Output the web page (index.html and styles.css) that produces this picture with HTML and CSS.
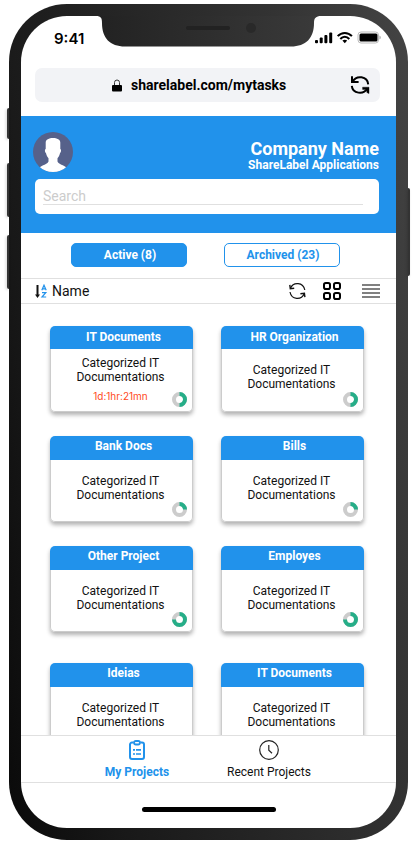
FILE: index.html
```html
<!DOCTYPE html>
<html lang="en">
<head>
<meta charset="utf-8">
<meta name="viewport" content="width=device-width, initial-scale=1">
<title>ShareLabel – My Tasks</title>
<link rel="stylesheet" href="styles.css">
</head>
<body>
<div class="phone">
  <span class="key key-mute"></span>
  <span class="key key-up"></span>
  <span class="key key-down"></span>
  <span class="key key-power"></span>
  <svg class="notch" viewBox="0 0 226 31" width="226" height="31" aria-hidden="true">
    <defs><linearGradient id="notch-fill"><stop offset="0" stop-color="#222"/><stop offset="1" stop-color="#3a3a3a"/></linearGradient></defs>
    <path d="M0 0C5 0 6 2 6 7C6 22 14 30.500 29 30.500H195C210 30.500 218 22 218 7C218 2 220 0 225 0Z" fill="url(#notch-fill)"/>
    <rect x="90" y="10" width="44" height="4" rx="2" fill="#222"/>
    <circle cx="155" cy="12" r="5" fill="#292929"/>
  </svg>
  <div class="screen">
    <div class="status">
      <span class="time">9:41</span>
      <svg width="66" height="14" viewBox="0 0 66 14" aria-hidden="true">
        <rect x="0" y="9" width="3" height="3.200" rx="1"/>
        <rect x="4.700" y="6.500" width="3" height="5.700" rx="1"/>
        <rect x="9.400" y="4" width="3" height="8.200" rx="1"/>
        <rect x="14.200" y="1.500" width="3" height="10.700" rx="1"/>
        <g fill="none" stroke="#000" stroke-width="2"><path d="M22.700 5.200C26.700 .8 32.900 .8 36.900 5.200"/><path d="M25.300 8C28 5 31.600 5 34.300 8"/></g>
        <path d="M27.400 9.600Q29.800 7.800 32.200 9.600L29.800 12.200Z"/>
        <rect x="43" y="1" width="20.500" height="11" rx="3" fill="#fff" stroke="#bbb"/>
        <rect x="44.500" y="2.500" width="18" height="8" rx="1.500"/>
        <path d="M64.300 4.500Q66 5 66 6.500T64.300 8.500Z" fill="#bbb"/>
      </svg>
    </div>
    <div class="address">
      <svg width="10" height="13" viewBox="0 0 10 13" aria-hidden="true"><path d="M2.500 6V3.500A2.500 2.500 0 0 1 7.500 3.500V6" fill="none" stroke="#333"/><rect y="6" width="10" height="6.500" rx="1"/></svg>
      <span class="url">sharelabel.com/mytasks</span>
      <button class="icon-button reload" type="button" aria-label="Reload page">
        <svg width="20" height="20" viewBox="0 0 20 20"><g fill="none" stroke="#000" stroke-width="2"><path d="M2 1.200V7H8.600"/><path d="M2.600 6.800C6.500 -.3 17.400 1.200 18.200 9.300"/><path d="M1.800 10.800C2.600 18.800 13.500 20.200 17.500 13.200"/></g><path d="M12.600 12.200H19V18.600L16.800 17.400V14.400H12.600Z" stroke="#000" stroke-width=".4"/></svg>
      </button>
    </div>
    <header class="header">
      <div class="identity">
        <svg width="40" height="40" viewBox="0 0 40 40" role="img" aria-label="Profile photo">
          <defs><clipPath id="avatar"><circle cx="20" cy="20" r="20"/></clipPath></defs>
          <circle cx="20" cy="20" r="20" fill="#56618a"/>
          <path clip-path="url(#avatar)" fill="#fff" d="M12.700 10.500C12.700 7.500 16 6 20 6C24 6 27.300 7.500 27.300 10.500V17C28.600 17.500 28 20.500 27 21.200C26.500 23.500 25.500 25 24.500 26.200V29.500C25.500 32.500 31 33 33.500 35.500L30 40H10L6.500 35.500C9 33 14.500 32.500 15.500 29.500V26.200C14.500 25 13.500 23.500 13 21.200C12 20.500 11.400 17.500 12.700 17Z"/>
        </svg>
        <div class="company">
          <h1>Company Name</h1>
          <p>ShareLabel Applications</p>
        </div>
      </div>
      <div class="search"><input type="search" placeholder="Search" aria-label="Search"></div>
    </header>
    <div class="tabs">
      <button class="tab tab-active" type="button">Active (8)</button>
      <button class="tab" type="button">Archived (23)</button>
    </div>
    <div class="toolbar">
      <button class="sort" type="button">
        <svg width="13" height="15" viewBox="0 0 13 15" aria-hidden="true"><path d="M2.500 1V12" stroke="#111" stroke-width="2"/><path d="M0 10.500H5L2.500 14Z" fill="#111"/><g fill="none" stroke="#2192eb" stroke-width="1.200"><path d="M6.800 6.300L9 1.200L11.200 6.300M7.500 4.800H10.500"/><path d="M7 8.700H10.800L7 13H11.200"/></g></svg>
        <span>Name</span>
      </button>
      <button class="icon-button" type="button" aria-label="Refresh">
        <svg width="18" height="18" viewBox="0 0 18 18" fill="none" stroke="#111" stroke-width="1.200"><path d="M2.500 6.300C5.200 -.4 15.200 0 16.800 8"/><path d="M2 10C3.500 18 13.500 18.200 16.200 11.700"/><path d="M1.800 2.800L2.300 6.700L6.200 6.200M12.400 11.800L16.400 11.300L16.900 15.200" stroke-width="1.400"/></svg>
      </button>
      <button class="icon-button" type="button" aria-label="Grid view">
        <svg width="18" height="18" viewBox="0 0 18 18" fill="none" stroke="#000" stroke-width="2"><rect x="1" y="1" width="6" height="6" rx="1.800"/><rect x="11" y="1" width="6" height="6" rx="1.800"/><rect x="1" y="11" width="6" height="6" rx="1.800"/><rect x="11" y="11" width="6" height="6" rx="1.800"/></svg>
      </button>
      <button class="icon-button" type="button" aria-label="List view">
        <svg width="18" height="18" viewBox="0 0 18 18" fill="#808080"><path d="M0 2H18V4H0ZM0 6H18V8H0ZM0 10H18V12H0ZM0 14H18V16H0Z"/></svg>
      </button>
    </div>
    <main class="projects">
      <div class="grid">
        <article class="card compact"><h2>IT Documents</h2><div class="body timed"><p>Categorized IT Documentations</p><p class="due">1d:1hr:21mn</p><svg class="donut" viewBox="0 0 15 15"><circle cx="7.500" cy="7.500" r="5.500"/><path d="M7.500 2A5.500 5.500 0 0 1 7.500 13"/></svg></div></article>
        <article class="card compact"><h2>HR Organization</h2><div class="body"><p>Categorized IT Documentations</p><svg class="donut" viewBox="0 0 15 15"><circle cx="7.500" cy="7.500" r="5.500"/><path d="M7.500 2A5.500 5.500 0 0 1 7.500 13"/></svg></div></article>
        <article class="card"><h2>Bank Docs</h2><div class="body"><p>Categorized IT Documentations</p><svg class="donut" viewBox="0 0 15 15"><circle cx="7.500" cy="7.500" r="5.500"/><path d="M7.500 2A5.500 5.500 0 0 1 13 7.500"/></svg></div></article>
        <article class="card"><h2>Bills</h2><div class="body"><p>Categorized IT Documentations</p><svg class="donut" viewBox="0 0 15 15"><circle cx="7.500" cy="7.500" r="5.500"/><path d="M7.500 2A5.500 5.500 0 0 1 13 7.500"/></svg></div></article>
        <article class="card"><h2>Other Project</h2><div class="body"><p>Categorized IT Documentations</p><svg class="donut" viewBox="0 0 15 15"><circle cx="7.500" cy="7.500" r="5.500"/><path d="M7.500 2A5.500 5.500 0 1 1 2 7.500"/></svg></div></article>
        <article class="card"><h2>Employes</h2><div class="body"><p>Categorized IT Documentations</p><svg class="donut" viewBox="0 0 15 15"><circle cx="7.500" cy="7.500" r="5.500"/><path d="M7.500 2A5.500 5.500 0 1 1 2 7.500"/></svg></div></article>
      </div>
      <div class="grid">
        <article class="card"><h2>Ideias</h2><div class="body"><p>Categorized IT Documentations</p></div></article>
        <article class="card"><h2>IT Documents</h2><div class="body"><p>Categorized IT Documentations</p></div></article>
      </div>
    </main>
    <nav class="nav">
      <a class="current" href="#projects">
        <svg width="20" height="22" viewBox="0 0 20 22" fill="none" stroke="#2192eb" stroke-width="2" aria-hidden="true"><path d="M6.500 3.500H5A2 2 0 0 0 3 5.500V18A2 2 0 0 0 5 20H15A2 2 0 0 0 17 18V5.500A2 2 0 0 0 15 3.500H13.500"/><rect x="7" y="2" width="6" height="3.500" rx="1.700" stroke-width="1.800"/><path d="M6 10.800H8M9 10.800H14M6 15H8M9 15H14" stroke-width="1.700"/></svg>
        <span>My Projects</span>
      </a>
      <a href="#recent">
        <svg width="20" height="22" viewBox="0 0 20 22" fill="none" stroke="#222" aria-hidden="true"><circle cx="10" cy="11" r="9.300" stroke-width="1.200"/><path d="M9.800 6V11.200L13 14.200" stroke-width="1.200"/></svg>
        <span>Recent Projects</span>
      </a>
    </nav>
    <div class="home"></div>
  </div>
</div>
</body>
</html>
```
FILE: styles.css
```css
* { box-sizing: border-box; }

body {
  margin: 0;
  padding: 4px 5px 3px 9px;
  background: #fff;
  color: #111;
  font-family: Roboto, sans-serif;
  font-size: 12px;
  line-height: 14px;
}

h1, h2, p { margin: 0; }
svg { display: block; flex: none; }
button { padding: 0; border: 0; background: none; color: inherit; font: inherit; }
a { color: inherit; text-decoration: none; }

.phone {
  position: relative;
  display: flex;
  height: calc(100vh - 7px);
  min-height: 640px;
  padding: 12px;
  border-radius: 58px;
  background: linear-gradient(80deg, #0a0a0a, #181818 20%, #333 75%, #444);
}

.key {
  position: absolute;
  left: -2px;
  width: 2px;
  border-radius: 2px 0 0 2px;
  background: #333;
  box-shadow: -1px 1px 3px rgba(0, 0, 0, 0.2);
}
.key-mute { top: 104px; height: 31px; }
.key-up { top: 159px; height: 54px; }
.key-down { top: 231px; height: 54px; }
.key-power { top: 184px; right: -2px; left: auto; height: 88px; border-radius: 0 2px 2px 0; }

.notch { position: absolute; top: 12px; left: 50%; transform: translateX(-50%); }

.screen {
  display: flex;
  flex: 1;
  flex-direction: column;
  min-width: 0;
  overflow: hidden;
  border-radius: 46px;
  background: #fff;
}

.status {
  display: flex;
  flex: none;
  align-items: center;
  justify-content: space-between;
  height: 52px;
  padding: 0 15px 8px 33px;
}
.time { padding-top: 2px; color: #000; font: 600 15px/18px Inter, sans-serif; }

.address {
  display: flex;
  flex: none;
  align-items: center;
  height: 34px;
  margin: 0 16px 14px 14px;
  padding: 0 10px 0 77px;
  border-radius: 7px;
  background: #f2f3f6;
  color: #000;
}
.url { flex: 1; margin-left: 9px; font-size: 14px; font-weight: 700; }

.icon-button { display: grid; place-items: center; flex: none; }

.header { flex: none; padding: 16px 17px 19px 12px; background: #2192eb; }
.identity { display: flex; justify-content: space-between; color: #fff; }
.company { padding-top: 7px; font-weight: 700; line-height: 13px; text-align: right; }
.company h1 { font-size: 18px; line-height: 20px; }
.search { display: flex; margin: 7px 0 0 2px; padding: 8px 16px 9px 8px; border-radius: 5px; background: #fff; }
.search input {
  width: 100%;
  height: 18px;
  padding: 0;
  border: 0;
  border-bottom: 1px solid #e0e0e0;
  border-radius: 0;
  outline: 0;
  background: none;
  font: 14px/16px Roboto, sans-serif;
  appearance: none;
}
.search input::placeholder { color: #ccc; }

.tabs { display: flex; flex: none; gap: 37px; padding: 10px 56px 11px 50px; }
.tab {
  flex: 1;
  height: 24px;
  padding-left: 2px;
  border: 1px solid #2192eb;
  border-radius: 5px;
  color: #2192eb;
  font-weight: 700;
}
.tab-active { background: #2192eb; color: #fff; }

.toolbar {
  display: flex;
  flex: none;
  align-items: center;
  gap: 20px;
  height: 26px;
  padding: 0 16px 0 14px;
  border: solid #e0e0e0;
  border-width: 1px 0;
}
.toolbar .icon-button { width: 18px; }
.toolbar .icon-button + .icon-button { margin-left: -3px; }
.toolbar .icon-button:last-child { margin-left: 1px; }
.sort { display: flex; align-items: center; gap: 4px; margin-right: auto; font-size: 14px; line-height: 16px; }

.projects { flex: 1; min-height: 0; padding: 22px 32px 0 29px; overflow: hidden; }
.grid { display: grid; grid-template-columns: 1fr 1fr; grid-auto-rows: 86px; gap: 24px 28px; }
.grid + .grid { margin-top: 31px; }
.card {
  display: flex;
  flex-direction: column;
  border-radius: 5px;
  box-shadow: 0 3px 4px rgba(0, 0, 0, 0.3);
}
.card h2 {
  padding: 3px 0 7px 4px;
  border-radius: 5px 5px 0 0;
  background: #2192eb;
  color: #fff;
  font-size: 12px;
  line-height: 14px;
  text-align: center;
}
.compact h2 { padding: 4px 0 5px 4px; }
.body {
  position: relative;
  flex: 1;
  padding: 14px 25px 0 23px;
  border: 1px solid #ccc;
  border-top: 0;
  border-radius: 0 0 5px 5px;
  background: #fff;
  text-align: center;
}
.timed { padding-top: 7px; }
.body .due { margin: 5px -10px 0; color: #ff4a1c; font: 10px/14px Inter, sans-serif; }
.donut {
  position: absolute;
  right: 5px;
  bottom: 4px;
  width: 15px;
  height: 15px;
  fill: none;
  stroke: #ccc;
  stroke-width: 4;
}
.donut path { stroke: #26ae88; }

.nav {
  display: flex;
  flex: none;
  justify-content: center;
  height: 48px;
  padding-right: 11px;
  border: solid #e0e0e0;
  border-width: 1px 0;
}
.nav a { display: flex; flex-direction: column; align-items: center; gap: 4px; width: 132px; padding-top: 3px; }
.nav .current { color: #2192eb; font-weight: 700; }

.home { flex: none; width: 134px; height: 5px; margin: 24px auto 16px; border-radius: 3px; background: #000; }
```
